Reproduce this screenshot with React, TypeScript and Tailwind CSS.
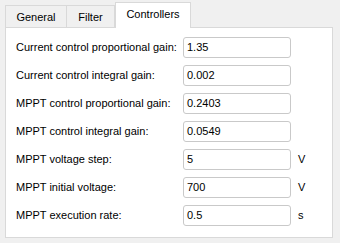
import React from "react";

// linhas do formulário
const rows = [
  { label: "Current control proportional gain:", value: "1.35", unit: "" },
  { label: "Current control integral gain:", value: "0.002", unit: "" },
  { label: "MPPT control proportional gain:", value: "0.2403", unit: "" },
  { label: "MPPT control integral gain:", value: "0.0549", unit: "" },
  { label: "MPPT voltage step:", value: "5", unit: "V" },
  { label: "MPPT initial voltage:", value: "700", unit: "V" },
  { label: "MPPT execution rate:", value: "0.5", unit: "s" },
];

export default function App() {
  return (
    <div
      className="w-[340px] h-[243px] bg-[#f0f0f0] text-[11px] text-black pt-[2px] pl-[5px]"
      style={{ fontFamily: "'Liberation Sans', Arial, sans-serif" }}
    >
      {/* abas */}
      <div className="flex items-end h-[25px]">
        <div className="h-[22px] w-[62px] border border-b-0 border-[#d9d9d9] bg-[#f0f0f0] flex items-center justify-center pt-[1px]">
          General
        </div>
        <div className="h-[22px] w-[48px] border border-b-0 border-l-0 border-[#d9d9d9] bg-[#f0f0f0] flex items-center justify-center pt-[1px]">
          Filter
        </div>
        <div className="relative z-10 h-[26px] w-[76px] -mb-px border border-b-0 border-[#d9d9d9] bg-white flex items-center justify-center pb-[2px]">
          Controllers
        </div>
      </div>

      {/* painel */}
      <div className="w-[328px] h-[211px] border border-[#d9d9d9] bg-white pt-[9px] pl-[10px] flex flex-col gap-[7px]">
        {rows.map((r) => (
          <div key={r.label} className="flex items-center h-[21px] whitespace-nowrap">
            <span className="w-[167px]">{r.label}</span>
            <div className="w-[108px] h-[21px] border border-[#c9c9c9] rounded-[3px] bg-white flex items-center pl-[3px]">
              {r.value}
            </div>
            <span className="ml-[7px]">{r.unit}</span>
          </div>
        ))}
      </div>
    </div>
  );
}
